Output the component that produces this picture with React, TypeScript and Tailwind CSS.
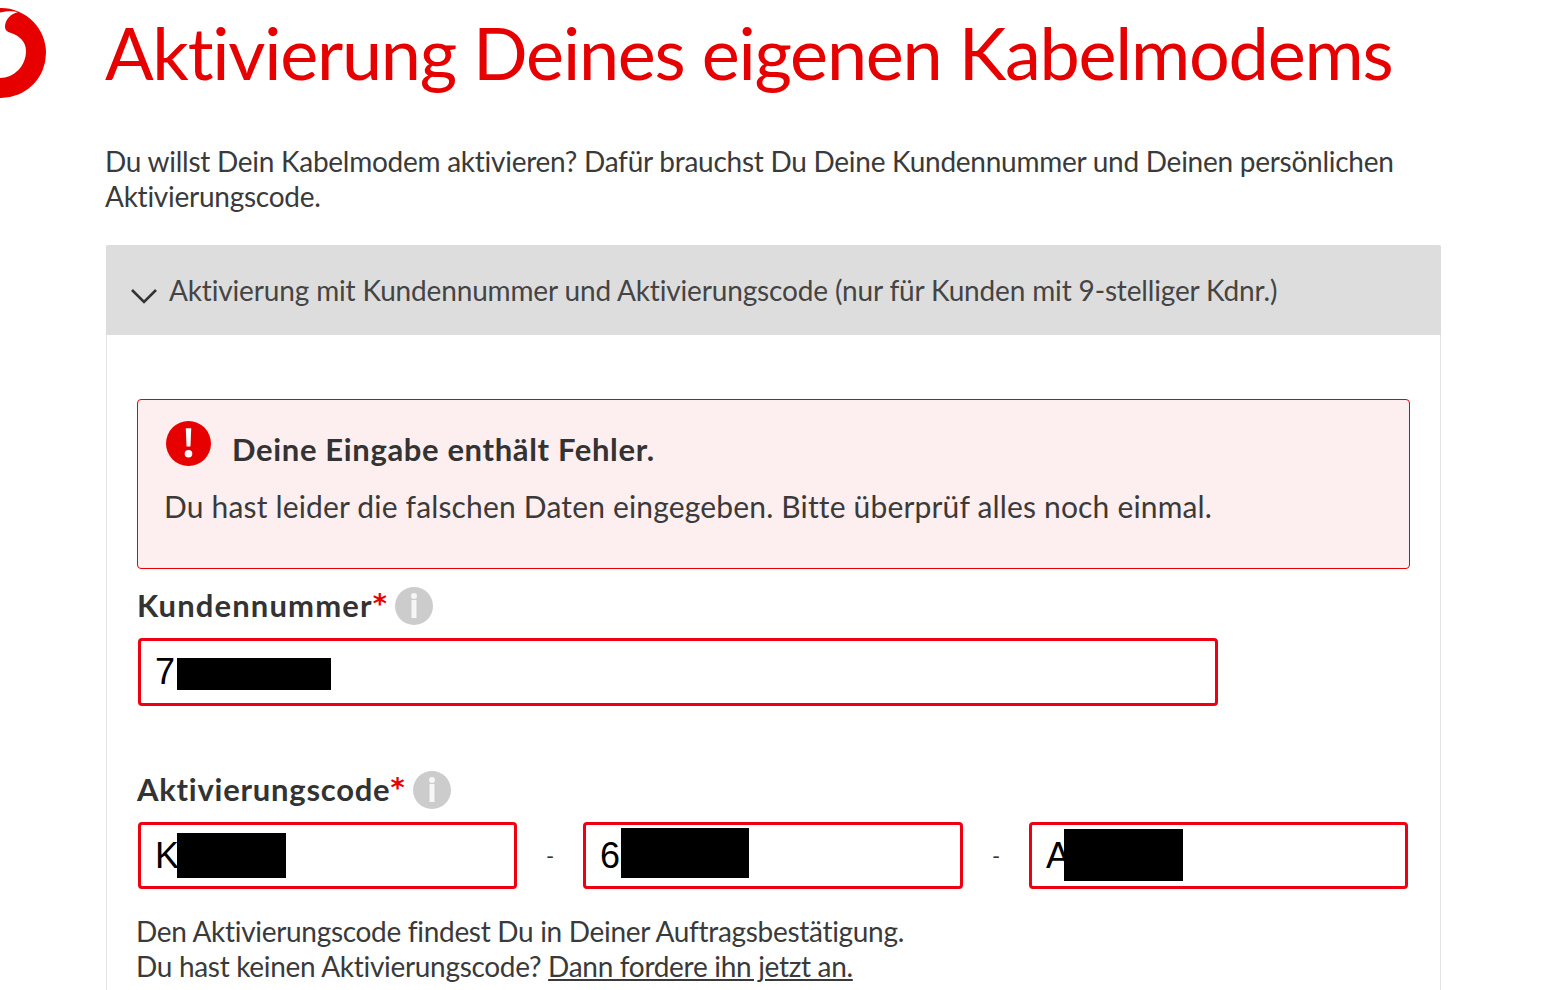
import React from "react";

const F = { fontFamily: '"Lato", "Noto Sans", sans-serif' };

function Logo() {
  return (
    <svg viewBox="0 8 46 90" className="block w-[46px] h-[90px]">
      <circle cx="1" cy="53" r="45" fill="#e60000" />
      <path d="M-2 13 C6 11 12 11 18 12 C10 14 5 20 5 27 C5 30 7 32 11 33 C20 36 26 42 26 51 C26 66 14 78 0 78 L-2 78 Z" fill="#ffffff" />
    </svg>
  );
}

function Info() {
  return (
    <span className="inline-flex items-center justify-center w-[38px] h-[38px] rounded-full bg-[#cccccc] shrink-0">
      <svg viewBox="0 0 38 38" className="w-[38px] h-[38px]">
        <circle cx="19" cy="9" r="3" fill="#f6f6f6" />
        <rect x="16.5" y="13" width="5" height="18" fill="#f6f6f6" />
      </svg>
    </span>
  );
}

function Field({ value, boxClass, widthClass }: { value: string; boxClass: string; widthClass: string }) {
  return (
    <div className={`relative h-full ${widthClass}`}>
      <input
        readOnly
        value={value}
        className="block w-full h-full border-[3px] border-[#ee0011] rounded-[4px] bg-white pl-[14px] text-[36px] text-black outline-none"
        style={{ fontFamily: '"Liberation Sans", Arial, sans-serif' }}
      />
      <div className={`absolute bg-black ${boxClass}`} />
    </div>
  );
}

function Dash() {
  return <span className="w-[66px] text-center text-[22px] text-[#333333]">-</span>;
}

function Star() {
  return (
    <span className="text-[#e60000] text-[27px] leading-[0] font-bold relative top-[-4px]" style={{ fontFamily: '"DejaVu Sans", sans-serif', letterSpacing: 0 }}>
      *
    </span>
  );
}

export default function App() {
  return (
    <div className="h-[990px] overflow-hidden bg-white flex text-[#3a3a3a] [font-variant-ligatures:none]" style={F}>
      <div className="w-[106px] shrink-0 pt-[8px]">
        <Logo />
      </div>
      <div className="w-[1335px] shrink-0">
        <h1 className="-ml-px h-[107px] text-[#e60000] text-[72px] leading-[105px] whitespace-nowrap font-normal tracking-[-1.25px]">
          Aktivierung Deines eigenen Kabelmodems
        </h1>
        <p className="-ml-px mt-[37px] text-[28px] leading-[35px] tracking-[-0.26px] font-normal w-[1320px]">
          Du willst Dein Kabelmodem aktivieren? Dafür brauchst Du Deine Kundennummer und Deinen persönlichen Aktivierungscode.
        </p>
        <div className="mt-[31px] h-[745px] border-x border-[#e4e4e4] rounded-t-[2px]">
          <div className="-mx-px h-[90px] bg-[#dddddd] flex items-center pl-[25px] rounded-t-[2px]">
            <svg viewBox="0 0 26 16" className="w-[26px] h-[16px] mt-[12px] shrink-0" fill="none" stroke="#333333" strokeWidth="2.6">
              <path d="M1 2 L13 14 L25 2" />
            </svg>
            <span className="ml-[12px] text-[28px] font-normal tracking-[-0.155px] whitespace-nowrap text-[#444444]">
              Aktivierung mit Kundennummer und Aktivierungscode (nur für Kunden mit 9-stelliger Kdnr.)
            </span>
          </div>
          <div className="px-[30px] pt-[64px]">
            <div className="h-[170px] border border-[#e60000] rounded-[4px] bg-[#fdeeef] pl-[28px] pt-[20px]">
              <div className="flex items-center h-[46px]">
                <svg viewBox="0 0 46 46" className="w-[45px] h-[45px] shrink-0">
                  <circle cx="23" cy="23" r="23" fill="#e60000" />
                  <path d="M20.2 7.5 H25.8 L25 26 H21 Z" fill="#fff" />
                  <circle cx="23" cy="33.5" r="3.9" fill="#fff" />
                </svg>
                <span className="ml-[21px] mt-[12px] text-[31px] font-bold tracking-[0.65px] text-[#333333] whitespace-nowrap">Deine Eingabe enthält Fehler.</span>
              </div>
              <p className="-ml-[2px] mt-[20px] text-[30px] leading-[40px] font-normal tracking-[0.17px] whitespace-nowrap">
                Du hast leider die falschen Daten eingegeben. Bitte überprüf alles noch einmal.
              </p>
            </div>
            <div className="flex items-center h-[38px] mt-[18px] gap-[8px]">
              <span className="text-[31px] font-bold whitespace-nowrap tracking-[1.13px] text-[#333333] relative top-[-1px]">
                Kundennummer<Star />
              </span>
              <Info />
            </div>
            <div className="h-[68px] mt-[13px] pl-px">
              <Field value="7" widthClass="w-[1080px]" boxClass="left-[39px] top-[20px] w-[154px] h-[32px]" />
            </div>
            <div className="flex items-center h-[38px] mt-[65px] gap-[8px]">
              <span className="text-[31px] font-bold whitespace-nowrap tracking-[0.75px] text-[#333333] relative top-[-1px]">
                Aktivierungscode<Star />
              </span>
              <Info />
            </div>
            <div className="flex items-center h-[67px] mt-[13px] pl-px">
              <Field value="K" widthClass="w-[379px]" boxClass="left-[39px] top-[11px] w-[109px] h-[45px]" />
              <Dash />
              <Field value="6" widthClass="w-[380px]" boxClass="left-[38px] top-[6px] w-[128px] h-[50px]" />
              <Dash />
              <Field value="A" widthClass="w-[379px]" boxClass="left-[35px] top-[7px] w-[119px] h-[52px]" />
            </div>
            <p className="-ml-px mt-[25px] text-[28px] leading-[35px] font-normal tracking-[-0.31px] whitespace-nowrap">
              Den Aktivierungscode findest Du in Deiner Auftragsbestätigung.
              <br />
              Du hast keinen Aktivierungscode? <a className="underline">Dann fordere ihn jetzt an.</a>
            </p>
          </div>
        </div>
      </div>
    </div>
  );
}
